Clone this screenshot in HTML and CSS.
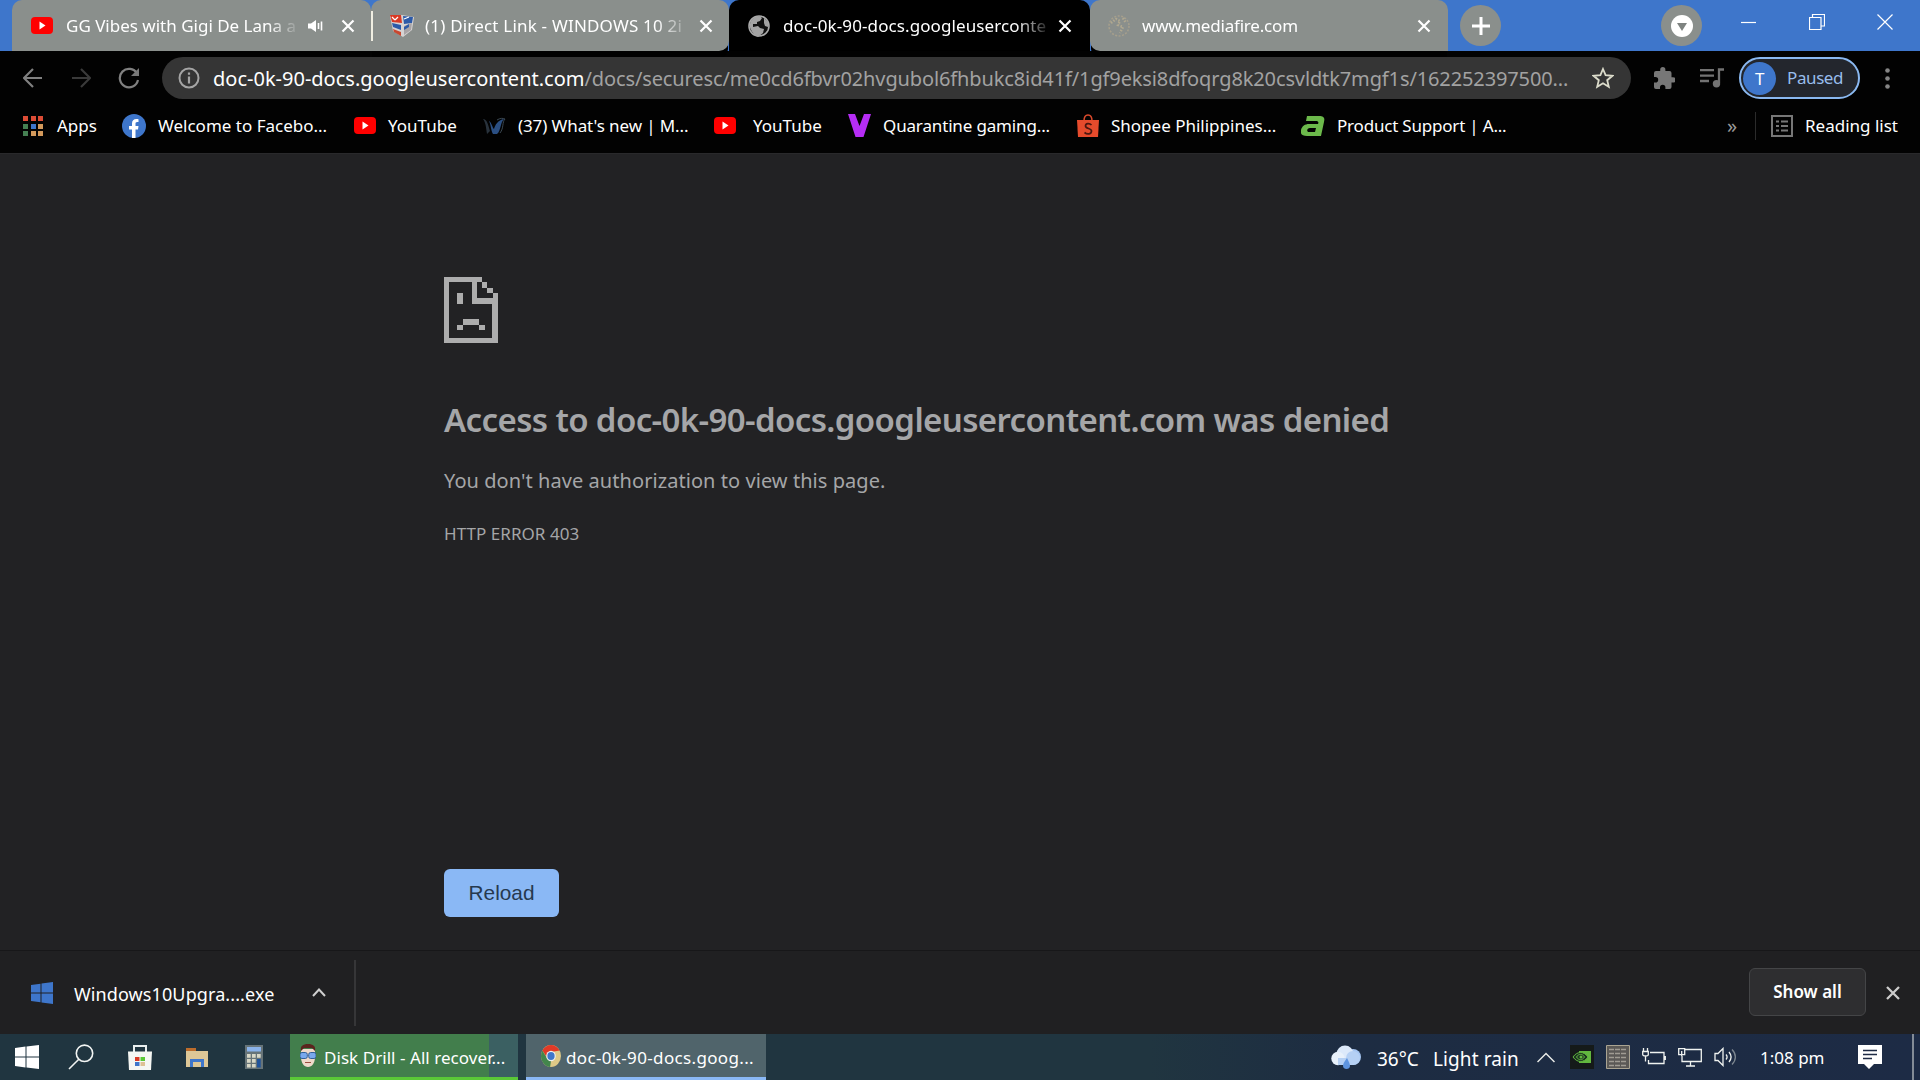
FILE: index.html
```html
<!DOCTYPE html>
<html lang="en">
	<head>
		<meta charset="utf-8">
		<title>doc-0k-90-docs.googleusercontent.com</title>
		<link rel="stylesheet" href="styles.css">
	</head>
	<body>
		<div class="tabstrip">
			<div class="tab first">
				<svg class="fav" width="22" height="17" viewBox="0 0 22 17"><rect width="22" height="17" rx="4" fill="#f00"/><path d="M8.5 4.5l6 4-6 4z" fill="#fff"/></svg>
				<span class="title t1">GG Vibes with Gigi De Lana a</span>
				<svg class="speaker" width="16" height="14" viewBox="0 0 16 14"><path d="M0 4.5h3L8 1v12L3 9.500H0z" fill="#fff"/><path d="M10.500 4v6M13.500 2.500v9" stroke="#fff" stroke-width="1.600"/></svg>
				<svg class="x" width="14" height="14" viewBox="0 0 14 14"><path d="M1.500 1.500l11 11M12.500 1.500l-11 11"/></svg>
			</div>
			<div class="tab second">
				<svg class="fav" width="26" height="24" viewBox="0 0 26 24"><path d="M1 2l12-1 12 2-2 13-9 7-10-6z" fill="#d5d3d3"/><path d="M1 1h11l1 8-10-1z" fill="#d93a24"/><path d="M14 2l10 1-1 6-8 1z" fill="#2c5aa8"/><path d="M3 9l9 2v5l-8-3z" fill="#2c5aa8"/><path d="M4 15l8 3v4l-7-4z" fill="#c9472f"/><path d="M15 12l8-3-1 7-7 5z" fill="#a9a4a6"/><path d="M3 3l3 3m3-3L6 6M15 5l5-2" stroke="#fff" stroke-width="1.200"/><path d="M15 13l5-3v3l-5 3z" fill="#2c5aa8"/></svg>
				<span class="title t2">(1) Direct Link - WINDOWS 10 2i</span>
				<svg class="x" width="14" height="14" viewBox="0 0 14 14"><path d="M1.500 1.500l11 11M12.500 1.500l-11 11"/></svg>
			</div>
			<div class="tab active">
				<svg class="fav" width="22" height="22" viewBox="0 0 22 22"><circle cx="11" cy="11" r="10" fill="#111" stroke="#aaa" stroke-width="1.600"/><path d="M2 9C3 4 7 1 12 1l2 2-2 3-3 1v2H5v3l5-1 2 2 4 1-1 4-5 4C5 19 1 14 2 9zM16 3l4 4v5l-3-1-1-3z" fill="#a3a3a3"/></svg>
				<span class="title t3">doc-0k-90-docs.googleuserconte</span>
				<svg class="x" width="14" height="14" viewBox="0 0 14 14"><path d="M1.500 1.500l11 11M12.500 1.500l-11 11"/></svg>
			</div>
			<div class="tab last">
				<svg class="fav" width="22" height="22" viewBox="0 0 22 22"><circle cx="11" cy="11" r="10" fill="none" stroke="#a69f8c" stroke-width="1.500" stroke-dasharray="2 1.500"/><path d="M3 8l5-4 4 2-2 4 5 2-3 6M15 3l3 5" fill="none" stroke="#b0a890" stroke-width="2.500" stroke-dasharray="1.500 1.500"/></svg>
				<span class="title t4">www.mediafire.com</span>
				<svg class="x" width="14" height="14" viewBox="0 0 14 14"><path d="M1.500 1.500l11 11M12.500 1.500l-11 11"/></svg>
			</div>
			<div class="round plus"><svg width="20" height="20" viewBox="0 0 20 20"><path d="M10 1v18M1 10h18" stroke="#fff" stroke-width="3"/></svg></div>
			<div class="round down"><svg width="22" height="22" viewBox="0 0 22 22"><circle cx="11" cy="11" r="11" fill="#fff"/><path d="M6 8h10l-5 8z" fill="#7e8380"/></svg></div>
			<div class="winbtns">
				<svg width="16" height="16" viewBox="0 0 16 16"><path d="M0 8.500h15"/></svg>
				<svg width="16" height="16" viewBox="0 0 16 16"><path d="M.5 3.500h11.500v12H.5zM3.500 3.500V.5h12v11.500H12"/></svg>
				<svg width="16" height="16" viewBox="0 0 16 16"><path d="M.5.5l15 15M15.500.5l-15 15"/></svg>
			</div>
		</div>
		<div class="toolbar">
			<svg class="nav back" width="20" height="20" viewBox="0 0 20 20"><path d="M19 10H2M10 1l-9 9 9 9"/></svg>
			<svg class="nav fwd" width="20" height="20" viewBox="0 0 20 20"><path d="M1 10h17M10 1l9 9-9 9"/></svg>
			<svg class="nav reload" width="22" height="22" viewBox="0 0 22 22"><path d="M19 6.500A9.200 9.200 0 1 0 20 13"/><path d="M21 1v8h-8z" fill="#777" stroke="none"/></svg>
			<div class="omnibox">
				<svg width="22" height="22" viewBox="0 0 22 22"><circle cx="11" cy="11" r="9.500" fill="none" stroke="#a5a5a5" stroke-width="2"/><path d="M11 9.500v7M11 5.500v2.300" stroke="#a5a5a5" stroke-width="2.200"/></svg>
				<span class="url"><b>doc-0k-90-docs.googleusercontent.com</b><i>/docs/securesc/me0cd6fbvr02hvgubol6fhbukc8id41f/1gf9eksi8dfoqrg8k20csvldtk7mgf1s/162252397500...</i></span>
				<svg width="22" height="22" viewBox="0 0 22 22"><path d="M11 2l2.600 6.200 6.800.6-5.200 4.400 1.600 6.600L11 16.300l-5.800 3.500 1.600-6.600-5.200-4.400 6.800-.6z" fill="none" stroke="#dcdccb" stroke-width="1.800"/></svg>
			</div>
			<svg class="puzzle" width="22" height="22" viewBox="0 0 22 22"><path d="M20 10.200h-1.500V6a2 2 0 0 0-2-2h-4.100V2.700a2.600 2.600 0 0 0-5.200 0V4H3a2 2 0 0 0-2 2v3.900h1.400a2.800 2.800 0 0 1 0 5.600H1V20a2 2 0 0 0 2 2h4v-1.500a2.700 2.700 0 0 1 5.400 0V22h4.100a2 2 0 0 0 2-2v-4.400H20a2.700 2.700 0 0 0 0-5.400z" fill="#777"/></svg>
			<svg class="queue" width="24" height="20" viewBox="0 0 24 20"><path d="M0 2.200h14M0 7.700h14M0 13h9M19 15V1.500h5" fill="none" stroke="#737373" stroke-width="2.300"/><circle cx="16.500" cy="15.800" r="3.700" fill="#737373"/></svg>
			<div class="profile"><span class="avatar">T</span>Paused</div>
			<svg class="dots" width="5" height="21" viewBox="0 0 5 21" fill="#858585"><circle cx="2.500" cy="2.500" r="2.300"/><circle cx="2.500" cy="10.500" r="2.300"/><circle cx="2.500" cy="18.500" r="2.300"/></svg>
		</div>
		<div class="bookmarks">
			<a><svg width="22" height="22" viewBox="0 0 22 22"><g fill="#dc4c35"><path d="M1 1h5v5H1zM9 1h5v5H9zM16 1h5v5h-5z"/></g><path d="M1 9h5v5H1zM1 16h5v5H1z" fill="#458052"/><path d="M9 9h5v5H9z" fill="#3e76cb"/><path d="M16 9h5v5h-5zM9 16h5v5H9zM16 16h5v5h-5z" fill="#d3995b"/></svg>Apps</a>
			<a><svg width="24" height="24" viewBox="0 0 24 24"><circle cx="12" cy="12" r="12" fill="#3e76cb"/><path d="M10 24v-8.500H7V12h3V9.500C10 6.500 11.700 5 14.300 5c1.200 0 2.200.2 2.200.2v2.900h-1.300c-1.300 0-1.700.8-1.700 1.700V12h3l-.5 3.500h-2.500V24z" fill="#fff"/></svg>Welcome to Facebo...</a>
			<a><svg width="22" height="17" viewBox="0 0 22 17"><rect width="22" height="17" rx="4" fill="#f00"/><path d="M8.500 4.500l6 4-6 4z" fill="#fff"/></svg>YouTube</a>
			<a class="dim"><svg width="24" height="20" viewBox="0 0 24 20"><path d="M1 3c4 0 5 5 7 12L5 18C4 12 4 7 1 3z" fill="#28323c"/><path d="M7 5c3 2 3 6 5 8 1-4 4-9 10-10-4 4-3 12-7 15h-4C9 15 9 9 7 5z" fill="#2b4f83"/><path d="M15 4c3-2 6-2 8-1-3 3-1 9-5 14" fill="none" stroke="#3b4852"/></svg>(37) What's new | M...</a>
			<a class="yt2"><svg width="22" height="17" viewBox="0 0 22 17"><rect width="22" height="17" rx="4" fill="#f00"/><path d="M8.500 4.500l6 4-6 4z" fill="#fff"/></svg>YouTube</a>
			<a><svg width="23" height="23" viewBox="0 0 23 23"><path d="M0 0h7l4.500 12L16 0h7l-7.500 23h-8z" fill="#b62df5"/></svg>Quarantine gaming...</a>
			<a><svg width="22" height="24" viewBox="0 0 22 24"><path d="M7 7c0-8 8-8 8 0" fill="none" stroke="#dd4a2c" stroke-width="1.500"/><path d="M0 6h22l-1 17H1z" fill="#e64b2c"/><path d="M14.500 11c-2-2-6-2-6 1s6 2 6 5-4 4-7 1.500" fill="none" stroke="#4b1710" stroke-width="1.700"/></svg>Shopee Philippines...</a>
			<a><svg width="24" height="20" viewBox="0 0 24 20"><path d="M6 0h12c5 0 6 2 5 6l-3 14H6c-5 0-7-2-6-6 1-4 4-6 8-6h9c1-2 0-3-2-3H5zM9 12c-3 0-4 4-1 4h6l1-4z" fill="#6cb94b" fill-rule="evenodd"/></svg>Product Support | A...</a>
			<span class="more">»</span>
			<a class="reading"><svg width="22" height="22" viewBox="0 0 22 22" fill="none" stroke="#777" stroke-width="2"><path d="M1 1h20v20H1zM5 6.500h3M5 11h3M5 15.500h3M10 6.500h7M10 11h7M10 15.500h7"/></svg>Reading list</a>
		</div>
		<div class="page">
			<svg width="54" height="66" viewBox="0 0 54 66" shape-rendering="crispEdges"><path d="M0 0h38v5H33v16h16v-5h5v50H0zM5 5v56h43V27H28V5zM13 16h6v11h-6zM19 42h16v6H19zM13 48h6v5h-6zM35 48h6v5h-6zM38 5h5v6h-5zM43 11h6v5h-6z" fill="#adadad" fill-rule="evenodd"/></svg>
			<h1>Access to doc-0k-90-docs.googleusercontent.com was denied</h1>
			<p>You don't have authorization to view this page.</p>
			<div class="code">HTTP ERROR 403</div>
			<button>Reload</button>
		</div>
		<div class="downloads">
			<div class="item">
				<svg width="22" height="22" viewBox="0 0 22 22" fill="#3e76cb"><path d="M0 3l9.500-1.300v8.800H0zM10.500 1.500L22 0v10.500H10.500zM0 11.500h9.500v8.800L0 19zM10.500 11.500H22V22l-11.500-1.500z"/></svg>
				<span>Windows10Upgra....exe</span>
				<svg width="14" height="9" viewBox="0 0 14 9"><path d="M1 8l6-6.500L13 8" fill="none" stroke="#cfcfcf" stroke-width="2"/></svg>
			</div>
			<div class="showall">Show all</div>
			<svg width="14" height="14" viewBox="0 0 14 14"><path d="M1 1l12 12M13 1L1 13" stroke="#ccc" stroke-width="2.300"/></svg>
		</div>
		<div class="taskbar">
			<div class="pins">
				<svg width="24" height="24" viewBox="0 0 24 24" fill="#fff"><path d="M0 3l10.500-1.500v10H0zM11.500 1.400L24 0v11.500H11.500zM0 12.500h10.500v10L0 21zM11.500 12.500H24V24l-12.500-1.500z"/></svg>
				<svg width="26" height="26" viewBox="0 0 26 26" fill="none" stroke="#f2f5f3" stroke-width="1.600"><circle cx="16.500" cy="9.300" r="8.200"/><path d="M10.800 15.200L1 25"/></svg>
				<svg width="24" height="25" viewBox="0 0 24 25"><path d="M6 7V1h12v6" fill="none" stroke="#e9eeee" stroke-width="2"/><path d="M0 6.500h24L23 25H1z" fill="#f5f7f3"/><path d="M7 12h4.500v4H7z" fill="#d93a24"/><path d="M12.500 12H17v4h-4.500z" fill="#5ac837"/><path d="M7 17h4.500v4H7z" fill="#3e76cb"/><path d="M12.500 17H17v4h-4.500z" fill="#ddc295"/></svg>
				<svg width="22" height="21" viewBox="0 0 22 21"><path d="M0 1h10v3h12v16H0z" fill="#ddc797"/><path d="M0 1h10v3H0z" fill="#bd6d2c"/><path d="M4 12h14v8h-3v-5H7v5H4z" fill="#3e76cb"/></svg>
				<svg width="18" height="24" viewBox="0 0 18 24"><path d="M0 0h18v24H0z" fill="#677478"/><path d="M2 2h14v4.500H2z" fill="#8ab3ea"/><path d="M2 9h3.700v3.700H2zM7 9h3.700v3.700H7zM12 9h3.700v3.700H12zM2 14h3.700v3.700H2zM7 14h3.700v3.700H7zM2 19h3.700v3.500H2zM7 19h3.700v3.500H7z" fill="#d8d7c6"/><path d="M12 14h3.700v8.500H12z" fill="#21549b"/></svg>
			</div>
			<div class="task drill">
				<svg width="16" height="23" viewBox="0 0 16 23"><path d="M1 5h14v8c0 6-3 10-7 10S1 19 1 13z" fill="#eed9ca"/><path d="M1 7C0 2 3 0 8 0s8 2 7 7L12 4H4z" fill="#5b241e"/><rect x="0" y="8.500" width="7.300" height="6" rx="2" fill="#79a9ed" stroke="#326099"/><rect x="8.700" y="8.500" width="7.300" height="6" rx="2" fill="#79a9ed" stroke="#326099"/><path d="M5 18.500h6" stroke="#9b4e3e"/></svg>
				<span>Disk Drill - All recover...</span>
			</div>
			<div class="task chrome">
				<svg width="20" height="22" viewBox="0 0 22 22" preserveAspectRatio="none"><circle cx="11" cy="11" r="11" fill="#dec987"/><path d="M1.500 5.500A11 11 0 0 1 20.500 5.500L11 7 7 13z" fill="#e13a27"/><path d="M1.500 5.500l5.300 8L11 16l-1 6A11 11 0 0 1 1.500 5.500z" fill="#43864c"/><circle cx="11" cy="11" r="5.300" fill="#edf0ef"/><circle cx="11" cy="11" r="4" fill="#3e76cb"/></svg>
				<span>doc-0k-90-docs.goog...</span>
			</div>
			<div class="tray">
				<svg class="cloud" width="31" height="24" viewBox="0 0 31 24"><circle cx="22" cy="12" r="8" fill="#a6c6f2"/><circle cx="14" cy="9" r="8.500" fill="#dce9fa"/><circle cx="7" cy="13.500" r="6.700" fill="#e8f1fb"/><path d="M7 13h16v7H7z" fill="#b5d0f4"/><circle cx="22" cy="13" r="7" fill="#b5d0f4"/><path d="M16 13c-3 4-4 6-4 8 0 4 7 4 7 0 0-2-1-4-3-8z" fill="#5e94df"/></svg>
				<span class="deg">36°C</span>
				<span class="rain">Light rain</span>
				<svg class="up" width="18" height="11" viewBox="0 0 18 11"><path d="M.5 10L9 1.500l8.500 8.500" fill="none" stroke="#e8eae6" stroke-width="1.500"/></svg>
				<svg class="nv" width="24" height="24" viewBox="0 0 24 24"><path d="M0 0h24v24H0z" fill="#151a19"/><path d="M9 6h12v12H9z" fill="#62b83f"/><path d="M3 12c4-6 11-6 15 0-4 6-11 6-15 0z" fill="#1c3520" stroke="#62b83f"/><path d="M6.500 12c2-3.500 6-3.500 8 0-2 3.500-6 3.500-8 0z" fill="none" stroke="#62b83f"/><circle cx="11" cy="12" r="1.500" fill="#62b83f"/></svg>
				<svg class="chip" width="24" height="24" viewBox="0 0 24 24"><path d="M.5.5h23v23H.5z" fill="#5b5956" stroke="#aaa492"/><path d="M3 4.500h18M3 8.500h18M3 12.500h18M3 16.500h18M3 20.500h18" stroke="#a09c93" stroke-width="1.500" stroke-dasharray="5 1"/></svg>
				<svg class="bat" width="24" height="18" viewBox="0 0 24 18" fill="none" stroke="#f0f3f0" stroke-width="1.300"><path d="M8 4.500h14v11H6.500V12M23.300 8v4M1.500 0v3.500M5.500 0v3.500M.7 3.500h5.600v3c0 2-5.600 2-5.600 0zM3.500 8v5.500"/></svg>
				<svg class="net" width="24" height="19" viewBox="0 0 24 19" fill="none" stroke="#f0f3f0" stroke-width="1.300"><path d="M7 1.500h16.300v12H4V8M12.500 13.500v4.500M8 18h9M.7.700h6v6h-6zM3.700 3v5"/></svg>
				<svg class="vol" width="23" height="20" viewBox="0 0 23 20" fill="none" stroke="#f0f3f0" stroke-width="1.300"><path d="M1 6.500h3l5-5v17l-5-5H1zM12 7.500c1.300 1.500 1.300 3.500 0 5M15 5c2.500 3 2.500 7 0 10"/><path d="M18 2.500c4.500 4.500 4.500 10.500 0 15" stroke="#7d8790"/></svg>
				<span class="time">1:08 pm</span>
				<svg class="note" width="24" height="24" viewBox="0 0 24 24"><path d="M0 0h24v19h-8l-5 5-5-5H0z" fill="#fff"/><path d="M5 5.500h14M5 9.500h14M5 13.500h9" stroke="#1e2b45" stroke-width="1.300"/></svg>
			</div>
		</div>
	</body>
</html>
```
FILE: styles.css
```css
* { box-sizing: border-box; }
body {
	margin: 0;
	width: 1920px;
	height: 1080px;
	overflow: hidden;
	background: #222224;
	color: #fff;
	font: 17px/24px "Noto Sans", sans-serif;
	white-space: nowrap;
}
svg { display: block; flex: none; }
span { flex: none; }

/* tabs */
.tabstrip {
	display: flex;
	height: 51px;
	padding-left: 12px;
	background: #3e76cb;
}
.tab {
	display: flex;
	align-items: center;
	height: 51px;
	background: #8a8f8c;
	border-radius: 10px 10px 0 0;
}
.first { width: 359px; padding-left: 19px; }
.second { width: 358px; padding-left: 18px; border-radius: 10px 10px 10px 0; }
.second:before {
	content: "";
	width: 2px;
	height: 30px;
	margin-left: -18px;
	margin-right: 16px;
	background: #f0eee2;
}
.active { width: 361px; padding-left: 19px; background: #000; }
.last { width: 358px; padding-left: 18px; border-radius: 10px 10px 0 10px; }
.second, .last { box-shadow: 0 8px 0 -1px #000; }
.title {
	margin-left: 13px;
	-webkit-mask-image: linear-gradient(90deg, #000 88%, transparent 102%);
	mask-image: linear-gradient(90deg, #000 88%, transparent 102%);
}
.t1 { width: 230px; }
.t2 { width: 262px; margin-left: 10px; letter-spacing: .2px; }
.t3 { width: 264px; letter-spacing: .1px; }
.t4 { width: 275px; margin-left: 12px; letter-spacing: -.2px; }
.speaker { margin-left: 12px; }
.x {
	margin-left: 17px;
	fill: none;
	stroke: #fff;
	stroke-width: 2.2;
}
.second .x { margin-left: 12px; }
.active .x { margin-left: 11px; }
.last .x { margin-left: 0; }
.round {
	display: flex;
	align-items: center;
	justify-content: center;
	flex: none;
	width: 41px;
	height: 41px;
	margin-top: 5px;
	border-radius: 50%;
	background: #8a8f8c;
}
.plus { margin-left: 12px; }
.down { margin-left: 160px; }
.winbtns {
	display: flex;
	gap: 52px;
	padding: 14px 0 0 39px;
	fill: none;
	stroke: #fff;
	stroke-width: 1.2;
}

/* toolbar */
.toolbar {
	display: flex;
	align-items: center;
	height: 54px;
	background: #020202;
}
.nav { fill: none; stroke: #808080; stroke-width: 2.2; }
.back { margin-left: 23px; }
.fwd { margin-left: 28px; stroke: #3a3a3a; }
.reload { margin-left: 27px; }
.omnibox {
	display: flex;
	align-items: center;
	width: 1469px;
	height: 42px;
	margin-left: 22px;
	padding: 0 17px 0 16px;
	border-radius: 21px;
	background: #353535;
}
.url {
	width: 1366px;
	margin-left: 13px;
	padding-top: 2px;
	font-size: 20px;
}
.url b { font-weight: 400; }
.url i {
	font-style: normal;
	color: #a2a2a2;
	letter-spacing: -.12px;
}
.omnibox svg:last-child { margin-left: 13px; }
.puzzle { margin-left: 22px; }
.queue { margin-left: 25px; }
.profile {
	display: flex;
	align-items: center;
	width: 121px;
	height: 42px;
	margin-left: 15px;
	padding-left: 2px;
	border: 2px solid #8ab8f0;
	border-radius: 21px;
	background: #23262d;
	color: #98bdec;
	letter-spacing: -.4px;
}
.avatar {
	width: 33px;
	height: 33px;
	margin-right: 11px;
	border-radius: 50%;
	background: #3e76cb;
	color: #fff;
	line-height: 33px;
	text-align: center;
}
.dots { margin-left: 25px; }

.bookmarks {
	display: grid;
	grid-template-columns: 100px 232px 128px 232px 134px 229px 224px 426px 28px 1fr;
	align-items: center;
	height: 49px;
	padding: 0 0 7px 22px;
	background: #020202;
	border-bottom: 1px solid #29292b;
}
.bookmarks a { display: flex; align-items: center; }
.bookmarks a svg { margin-right: 12px; }
.bookmarks a:nth-child(1) svg { margin-right: 13px; }
.bookmarks a.dim { letter-spacing: -.1px; }
.bookmarks a.yt2 svg { margin-right: 17px; }
.bookmarks a:nth-child(6) { letter-spacing: -.15px; }
.bookmarks a:nth-child(8) { letter-spacing: -.2px; }
.more { color: #999; font-size: 20px; }
.bookmarks .reading {
	height: 28px;
	padding-left: 15px;
	border-left: 1px solid #2b2b2b;
}

/* error page */
.page { height: 796px; padding: 123px 0 0 444px; color: #a5a6a8; }
h1 {
	margin: 53px 0 0;
	font-size: 33px;
	font-weight: 600;
	line-height: 48px;
	letter-spacing: -.62px;
}
p { margin: 24px 0 0; font-size: 20px; line-height: 26px; letter-spacing: .06px; }
.code { margin: 28px 0 0; letter-spacing: .05px; }
button {
	display: block;
	width: 115px;
	height: 48px;
	margin: 323px 0 0;
	border: 0;
	border-radius: 6px;
	background: #8ab8f5;
	color: #26394f;
	font: 20.8px "Liberation Sans", sans-serif;
}

.downloads {
	display: flex;
	align-items: center;
	height: 84px;
	padding-right: 20px;
	border-top: 1px solid #171719;
	background: #202022;
}
.item {
	display: flex;
	align-items: center;
	width: 356px;
	height: 66px;
	padding-left: 31px;
	border-right: 2px solid #363638;
	font-size: 18px;
	letter-spacing: .1px;
}
.item span { width: 259px; padding-left: 21px; padding-top: 3px; }
.showall {
	width: 117px;
	height: 48px;
	margin: -2px 20px 0 auto;
	border: 1px solid #444547;
	border-radius: 6px;
	background: #2e2e30;
	font-weight: 600;
	line-height: 45px;
	text-align: center;
}

/* taskbar */
.taskbar {
	display: flex;
	height: 46px;
	background: linear-gradient(90deg, #203540 0 1150px, #1d2c42 1350px, #1d2b45);
}
.pins {
	display: grid;
	grid-template-columns: 54px 59px 58px 59px 18px;
	align-items: center;
	width: 275px;
	padding-left: 15px;
}
.pins svg:nth-child(2) { margin-left: -1px; }
.task {
	display: flex;
	align-items: center;
	height: 46px;
	border-bottom: 3px solid;
}
.drill {
	width: 228px;
	margin-left: 15px;
	padding-left: 10px;
	border-color: #5ac837;
	background: linear-gradient(90deg, #427e4c 199px, #3b6062 199px);
}
.drill span { margin-left: 8px; padding-top: 5px; letter-spacing: .05px; }
.chrome {
	width: 240px;
	margin-left: 8px;
	padding-left: 15px;
	border-color: #8ab8f5;
	background: #50646b;
}
.chrome span { margin-left: 5px; padding-top: 5px; letter-spacing: .35px; }
.tray {
	display: flex;
	align-items: center;
	flex: 1;
	margin-right: 6px;
	padding-left: 565px;
	border-right: 2px solid #838c97;
}
.deg, .rain { margin-left: 15px; font-size: 19px; padding-top: 3px; }
.deg { width: 43px; }
.rain { width: 86px; margin-left: 13px; letter-spacing: .1px; }
.up { margin-left: 18px; }
.nv { margin-left: 15px; }
.chip { margin-left: 12px; }
.bat { margin-left: 12px; }
.net { margin-left: 12px; }
.vol { margin-left: 12px; }
.time { width: 66px; margin-left: 23px; padding-top: 2px; }
.note { margin-left: 32px; }
```
